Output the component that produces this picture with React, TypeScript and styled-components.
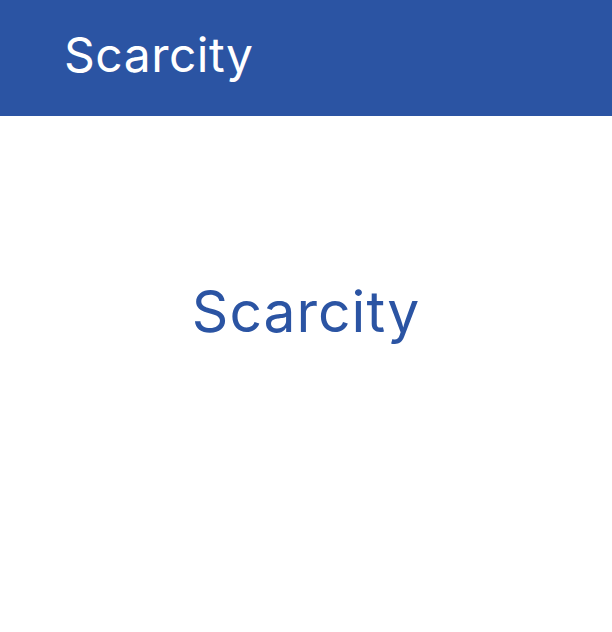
import React from "react";
import styled, { createGlobalStyle } from "styled-components";

const Global = createGlobalStyle`
  html, body { margin: 0; padding: 0; background: #ffffff; }
  body { font-family: Inter, "Liberation Sans", sans-serif; }
`;

const Page = styled.div`
  display: flex;
  flex-direction: column;
  width: 612px;
  height: 632px;
`;

const Header = styled.header`
  height: 116px;
  background: #2b54a3;
  display: flex;
  align-items: flex-start;
  padding: 31px 0 0 64px;
  box-sizing: border-box;
`;

const HeaderTitle = styled.h1`
  margin: 0;
  font-weight: 400;
  font-size: 48px;
  letter-spacing: 0.5px;
  line-height: 1;
  color: #ffffff;
`;

const Content = styled.main`
  display: flex;
  justify-content: center;
  padding-top: 167px;
`;

const Title = styled.div`
  font-size: 57px;
  letter-spacing: 1px;
  line-height: 1;
  color: #2b54a3;
`;

export default function App() {
  return (
    <>
      <Global />
      <Page>
        <Header>
          <HeaderTitle>Scarcity</HeaderTitle>
        </Header>
        <Content>
          <Title>Scarcity</Title>
        </Content>
      </Page>
    </>
  );
}
